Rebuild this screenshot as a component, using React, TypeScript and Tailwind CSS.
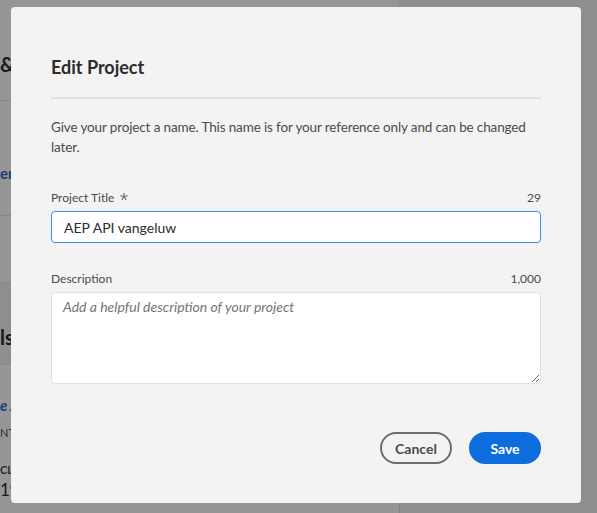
// Edit Project modal over a dimmed page
function Asterisk() {
  return (
    <svg width="8" height="8" viewBox="0 0 8 8" className="ml-[6px] mb-[3px] text-[#747474]" fill="currentColor">
      <path d="M3.3 0h1.4l-.1 3 2.8-1 .4 1.3-2.8.8 1.8 2.4-1.1.8L4 4.8 2.3 7.3l-1.1-.8L3 4.1.2 3.3.6 2l2.8 1z" />
    </svg>
  )
}

function Page() {
  return (
    <div className="flex h-full bg-[#f2f2f2]">
      <div className="w-[399px] flex flex-col bg-white">
        <div className="h-[101px] border-b border-[#e6e6e6] flex items-end pb-[24px]">
          <span className="text-[20px] leading-[24px] font-bold text-[#2c2c2c]">&amp;</span>
        </div>
        <div className="h-[115px] border-b border-[#e6e6e6] pt-[60px]">
          <span className="text-[15px] leading-[20px] font-bold text-[#2c6ac4]">en</span>
        </div>
        <div className="h-[67px] border-b border-[#e6e6e6]" />
        <div className="h-[82px] bg-[#f4f4f4] border-b border-[#e6e6e6] pt-[42px]">
          <span className="text-[20px] leading-[24px] font-bold text-[#2c2c2c]">ls</span>
        </div>
        <div className="pt-[30px] flex flex-col">
          <span className="text-[15px] leading-[20px] font-bold italic text-[#2c6ac4]">e A</span>
          <span className="mt-[11px] text-[11px] leading-[14px] text-[#4b4b4b]">NT</span>
          <span className="mt-[23px] text-[11px] leading-[14px] font-bold text-[#4b4b4b]">CLI</span>
          <span className="mt-[3px] text-[17px] leading-[20px] text-[#2c2c2c]">19</span>
        </div>
      </div>
      <div className="flex-1 flex flex-col">
        <div className="flex-1" />
        <div className="h-[20px] border-l border-[#dcdcdc]" />
      </div>
    </div>
  )
}

export default function App() {
  return (
    <div className="relative h-[513px] w-full overflow-hidden font-[Lato,sans-serif]">
      <Page />
      <div className="absolute inset-0 bg-black/[0.41] flex items-start pl-[11px] pt-[7px]">
        <div className="w-[570px] h-[496px] bg-[#f3f3f3] rounded-[4px] px-[40px] pt-[48px] flex flex-col">
          <h2 className="text-[18px] leading-[24px] font-bold text-[#2c2c2c]">Edit Project</h2>
          <div className="mt-[18px] h-[2px] bg-[#e1e1e1]" />
          <p className="mt-[18px] text-[13.5px] leading-[20px] tracking-[-0.01em] text-[#4b4b4b]">
            Give your project a name. This name is for your reference only and can be changed later.
          </p>

          <div className="mt-[33px] flex items-end justify-between text-[12px] leading-[16px] text-[#4b4b4b]">
            <div className="flex items-center">
              <span>Project Title</span>
              <Asterisk />
            </div>
            <span>29</span>
          </div>
          <div className="mt-[5px] h-[32px] flex items-center rounded-[4px] border border-[#378ef0] bg-white px-[12px]">
            <input
              defaultValue="AEP API vangeluw"
              className="w-full bg-transparent text-[14px] text-[#2c2c2c] outline-none"
            />
          </div>

          <div className="mt-[28px] flex items-end justify-between text-[12px] leading-[16px] text-[#4b4b4b]">
            <span>Description</span>
            <span>1,000</span>
          </div>
          <textarea
            placeholder="Add a helpful description of your project"
            className="mt-[5px] h-[92px] w-full rounded-[4px] border border-[#e1e1e1] bg-white px-[11px] pt-[3px] text-[14px] leading-[21px] placeholder:italic placeholder:text-[#747474] outline-none"
          />

          <div className="mt-auto mb-[39px] flex justify-end gap-[17px]">
            <button className="h-[32px] w-[72px] rounded-full border-2 border-[#6e6e6e] text-[14px] font-bold text-[#4b4b4b]">
              Cancel
            </button>
            <button className="h-[32px] w-[72px] rounded-full bg-[#0d6ddf] text-[14px] font-bold text-white">
              Save
            </button>
          </div>
        </div>
      </div>
    </div>
  )
}
